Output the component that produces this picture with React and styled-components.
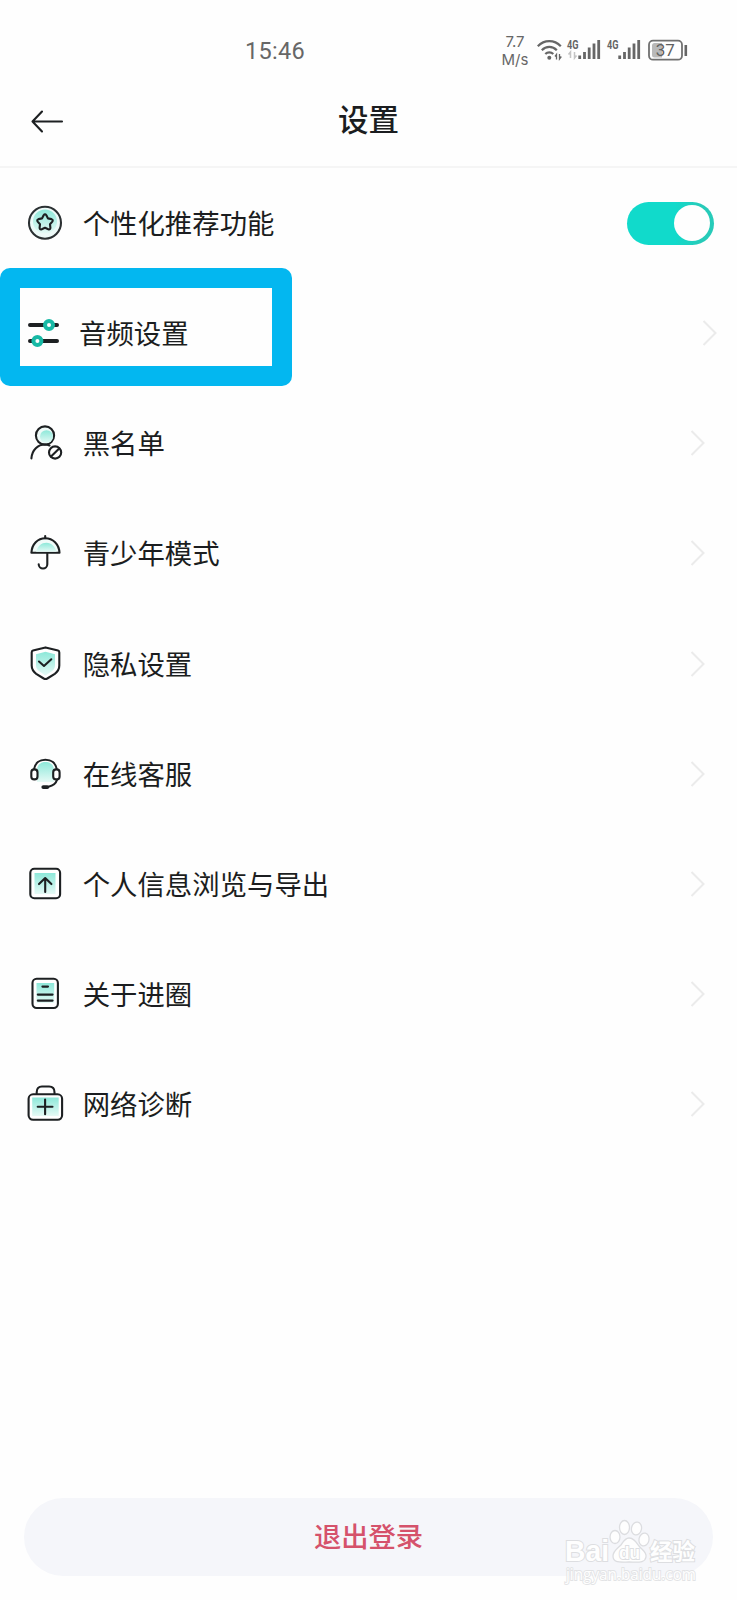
import React from "react";
import styled, { createGlobalStyle, css } from "styled-components";

const GlobalStyle = createGlobalStyle`
  *, *::before, *::after { box-sizing: border-box; }
  body { margin: 0; background: #fefefe; }
  button { font: inherit; border: 0; padding: 0; background: none; }
  svg { display: block; flex: none; overflow: visible; }
`;

const Screen = styled.div`
  position: relative;
  display: flex;
  flex-direction: column;
  width: 737px;
  height: 1600px;
  overflow: hidden;
  background: #fefefe;
  color: #1b1d20;
  font-family: "Noto Sans CJK SC", "Noto Sans", sans-serif;
`;

const StatusBar = styled.div`
  display: flex;
  align-items: center;
  justify-content: space-between;
  height: 76px;
  padding: 25px 50px 0 245px;
  color: #676767;
  font-family: Roboto, sans-serif;
`;

const Clock = styled.time`
  font-size: 23.5px;
  line-height: 50px;
  letter-spacing: 0.3px;
`;

const StatusIcons = styled.div`
  display: flex;
  align-items: center;
`;

const NetSpeed = styled.div`
  display: flex;
  flex-direction: column;
  width: 32px;
  margin-right: 7px;
  text-align: center;
  font-family: Inter, sans-serif;
  font-size: 15px;
  line-height: 18px;
`;

const Header = styled.header`
  display: grid;
  grid-template-columns: 1fr auto 1fr;
  align-items: center;
  height: 92px;
  padding: 0 31px 2px;
  border-bottom: 2px solid #f5f5f5;
`;

const Title = styled.h1`
  margin: 0;
  padding-bottom: 5px;
  font-size: 30.5px;
  font-weight: 500;
  line-height: 44px;
`;

const BackButton = styled.button`
  width: 34px;
  padding-top: 3px;
`;

const List = styled.main`
  flex: 1;
`;

const Row = styled.div`
  position: relative;
  display: flex;
  align-items: center;
  height: 110.15px;
  padding: 0 ${(p) => (p.$wide ? 23.5 : 32)}px 0 25px;
  ${(p) =>
    p.$marked &&
    css`
      padding-right: 20.5px;
      &::after {
        content: "";
        position: absolute;
        left: 0;
        top: -10px;
        width: 292px;
        height: 118px;
        border-radius: 10px;
        background:
          linear-gradient(#03b7f0, #03b7f0) 0 0 / 100% 20px no-repeat,
          linear-gradient(#03b7f0, #03b7f0) 0 100% / 100% 20px no-repeat,
          linear-gradient(#03b7f0, #03b7f0) 0 0 / 20px 100% no-repeat,
          linear-gradient(#03b7f0, #03b7f0) 100% 0 / 20px 100% no-repeat;
      }
    `}
`;

const Label = styled.span`
  flex: 1;
  margin-left: ${(p) => (p.$tight ? 14 : 17.7)}px;
  padding-bottom: 2px;
  font-size: 27.4px;
  line-height: 40px;
`;

const Switch = styled.button`
  display: flex;
  align-items: center;
  justify-content: flex-end;
  width: 87px;
  height: 43px;
  padding-right: 4px;
  border-radius: 22px;
  background: linear-gradient(90deg, #11dacb 55%, #27cbb9 85%);
`;

const Knob = styled.span`
  width: 36px;
  height: 36px;
  border-radius: 50%;
  background: #fefefe;
`;

const Footer = styled.footer`
  padding: 0 24px 24px;
`;

const LogoutButton = styled.button`
  width: 100%;
  height: 78px;
  padding-bottom: 5px;
  border-radius: 39px;
  background: #f5f6fa;
  color: #d5526b;
  font-size: 27.3px;
  font-weight: 500;
  line-height: 72px;
`;

const Watermark = styled.div`
  position: absolute;
  left: 560px;
  top: 1516px;
`;

const icons = {
  star: (
    <>
      <circle cx="20" cy="19.7" r="16" fill="#edfaf8" stroke="#2b3032" />
      <circle cx="20" cy="18.5" r="12" fill="url(#mint)" stroke="none" />
      <path d="M18.6 12.3q1.4-2 2.8 0l1.6 3.1 3.5.7q2 .8.8 2.5l-2.3 2.6.4 3.6q0 2.1-2.1 1.5L20 24.8l-3.3 1.5q-2.1.6-2.1-1.5l.4-3.6-2.3-2.6q-1.2-1.7.8-2.5l3.5-.7z" />
    </>
  ),
  sliders: (
    <>
      <path d="M5 12h27M5 28h27" strokeWidth="4" />
      <circle cx="24" cy="12" r="4" fill="#fff" stroke="#17b9a5" strokeWidth="4" />
      <circle cx="12.4" cy="28" r="4" fill="#fff" stroke="#17b9a5" strokeWidth="4" />
    </>
  ),
  blocked: (
    <>
      <circle cx="20" cy="12.5" r="9.1" fill="#eefaf8" />
      <circle cx="21.5" cy="13.7" r="6.5" fill="url(#mint)" stroke="none" />
      <path d="M6.4 35.4C7 26.6 13 21.5 20 21.5c2 0 3.3.4 4.5 1" />
      <circle cx="30.1" cy="29.5" r="6.1" />
      <path d="m26 33.6 8.2-8.2" />
    </>
  ),
  umbrella: (
    <>
      <path d="M6.4 19.8C6.8 11 12.8 5.2 20.3 5.2S34.1 11 34.5 19.8z" fill="#f0fbf9" />
      <path d="M11 18.8c2-6 5.3-9 10.5-9 5 0 8.5 4 10.2 9z" fill="url(#mint)" stroke="none" />
      <path d="M20.2 5.2V3M22.3 20v11.2a4.3 4.3 0 0 1-8.6 0" />
    </>
  ),
  shield: (
    <>
      <path d="M20.5 3.4 33 6.6q1.3.4 1.3 1.8v13.2q0 5-4.5 8.2l-7.5 4.7q-1.8 1-3.6 0l-7.5-4.7q-4.5-3.2-4.5-8.2V8.4q0-1.4 1.3-1.8z" fill="#fff" />
      <path d="m20.5 7.8 9.5 2.4v11q0 4-3.5 6.3l-6 4-6-4Q11 25.2 11 21.2v-11z" fill="url(#mint)" stroke="none" />
      <path d="m14 17.5 5 4.5 7.3-6.7" />
    </>
  ),
  headset: (
    <>
      <path d="M12 28V15c1-5 4-7 8.5-7s7.5 2 8.5 7v13z" fill="url(#mint)" stroke="none" />
      <path d="M9 15.4C10 9 14.6 5.7 20.4 5.7S30.800 9 31.8 15.4M32 25.8c-1 3.7-4.3 6-8.5 6.9" />
      <rect x="6.3" y="15.4" width="6.2" height="10" rx="3" fill="#fff" />
      <rect x="28.2" y="15.4" width="6.4" height="10" rx="3" fill="#fff" />
      <path d="M18.3 33.1h4" strokeWidth="3.8" />
    </>
  ),
  upload: (
    <>
      <rect x="5.3" y="4.8" width="29.8" height="29.5" rx="4" fill="#fff" />
      <path d="M9.5 9h21v21h-21z" fill="url(#mint)" stroke="none" />
      <path d="M20.2 28V14.1M14 20.1l6.2-6.1 6.2 6.1" />
    </>
  ),
  document: (
    <>
      <rect x="7.5" y="4.8" width="25.4" height="29.2" rx="4.2" fill="#fff" />
      <path d="M11.5 9h17.7v20H11.5z" fill="url(#mint)" stroke="none" />
      <path d="M17.4 12.6h5.6M12.8 20.6h14.8M12.8 26.6h14.8" />
    </>
  ),
  medkit: (
    <>
      <path d="M11.7 9.5V8.2c0-3.5 2-5.7 5.2-5.7h7.2c3.3 0 5.4 2.2 5.4 5.7v1.3" />
      <rect x="3.6" y="10.3" width="33.5" height="25.5" rx="4.5" fill="#fff" />
      <path d="M7.2 13.5h26.5V32H7.200z" fill="url(#mint)" stroke="none" />
      <path d="M12.7 22.8h14.8M20.1 15.5v14.7" />
    </>
  ),
};

function RowIcon({ name }) {
  return (
    <svg width="40" height="40" viewBox="0 0 40 40" fill="none" stroke="#1d2022" strokeWidth="2.1" strokeLinecap="round" strokeLinejoin="round">
      {icons[name]}
    </svg>
  );
}

function Chevron() {
  return (
    <svg width="15" height="28" viewBox="0 0 15 28" fill="none" stroke="#ebebeb" strokeWidth="2">
      <path d="M1.5 2 13.5 14 1.5 26" />
    </svg>
  );
}

const Tag = styled.text`
  font: 700 12px Roboto, sans-serif;
  fill: #666;
`;

function Signal({ data }) {
  return (
    <svg width="40" height="26" viewBox="0 0 40 26">
      <Tag x="-1" y="10.5" textLength="11.5" lengthAdjust="spacingAndGlyphs">4G</Tag>
      {data && <path d="M2.500 20v-6L.5 16.5M6.500 14v6l2-2.500" stroke="#c4c4c4" strokeWidth="1.5" fill="none" />}
      <path d="M11.700 17.500V21M16.500 14v7M21.200 9.500V21M26 5.500V21M30.700 2v19" stroke="#666" strokeWidth="2.8" />
    </svg>
  );
}

function Wifi() {
  return (
    <svg width="30" height="26" viewBox="1 1 30 26" fill="none" stroke="#666" strokeWidth="2.2">
      <path d="M.8 9.2c6.500-6.800 16.500-6.800 23 0M4.800 13.200c4.300-4.400 10.700-4.400 15 0M8.300 17c2.300-2.300 5.700-2.300 8 0" />
      <circle cx="12.3" cy="20.8" r="2" fill="#666" stroke="none" />
      <path d="M19.500 22.500v-5l-1.500 2M22.500 17v5l1.800-2.500" strokeWidth="1.3" />
    </svg>
  );
}

const BatteryText = styled.text`
  font: 400 17px Roboto, sans-serif;
  fill: #606060;
`;

function Battery() {
  return (
    <svg width="39" height="24" viewBox="0 0.5 39 24">
      <rect x="1" y="2.2" width="33" height="19" rx="4" fill="none" stroke="#707070" strokeWidth="1.8" />
      <path d="M6.5 4.5H14V19H6.5Q4 19 4 16.5V7q0-2.500 2.500-2.500z" fill="#b9b9b9" />
      <path d="M37.8 6.500v11" stroke="#666" strokeWidth="2.6" />
      <BatteryText x="17.2" y="17.8" textAnchor="middle">37</BatteryText>
    </svg>
  );
}

const MarkText = styled.text`
  font-family: ${(p) => (p.$cjk ? '"Noto Sans CJK SC"' : '"Liberation Sans"')}, sans-serif;
  font-size: ${(p) => p.$size}px;
  font-weight: 700;
  fill: #fefefe;
  stroke: #dddee1;
  stroke-width: ${(p) => p.$line || 2}px;
  paint-order: stroke;
`;

const MarkUrl = styled.text`
  font: 400 16px "Open Sans", sans-serif;
  fill: #fefefe;
  stroke: #e2e3e5;
  stroke-width: 1.8px;
  paint-order: stroke;
`;

const rows = [
  { icon: "star", label: "个性化推荐功能", toggle: true },
  { icon: "sliders", label: "音频设置", marked: true },
  { icon: "blocked", label: "黑名单" },
  { icon: "umbrella", label: "青少年模式" },
  { icon: "shield", label: "隐私设置" },
  { icon: "headset", label: "在线客服" },
  { icon: "upload", label: "个人信息浏览与导出" },
  { icon: "document", label: "关于进圈" },
  { icon: "medkit", label: "网络诊断" },
];

export default function App() {
  return (
    <Screen>
      <GlobalStyle />
      <svg width="0" height="0" style={{ position: "absolute" }}>
        <defs>
          <linearGradient id="mint" x1="0" y1="0" x2="0" y2="1">
            <stop offset="0" stopColor="#8de8d9" />
            <stop offset="1" stopColor="#e6faf6" />
          </linearGradient>
        </defs>
      </svg>
      <StatusBar>
        <Clock>15:46</Clock>
        <StatusIcons>
          <NetSpeed>
            <span>7.7</span>
            <span>M/s</span>
          </NetSpeed>
          <Wifi />
          <Signal data />
          <Signal />
          <Battery />
        </StatusIcons>
      </StatusBar>
      <Header>
        <BackButton aria-label="返回">
          <svg width="34" height="26" viewBox="0 0 34 26" fill="none" stroke="#1d2022" strokeWidth="2.1" strokeLinecap="round" strokeLinejoin="round">
            <path d="M31 12.5H1.5M11 2.5 1.5 12.5 11 22.5" />
          </svg>
        </BackButton>
        <Title>设置</Title>
      </Header>
      <List>
        {rows.map((row) => (
          <Row key={row.icon} $wide={row.toggle} $marked={row.marked}>
            <RowIcon name={row.icon} />
            <Label $tight={row.marked}>{row.label}</Label>
            {row.toggle ? <Switch role="switch" aria-checked="true"><Knob /></Switch> : <Chevron />}
          </Row>
        ))}
      </List>
      <Footer>
        <LogoutButton>退出登录</LogoutButton>
      </Footer>
      <Watermark>
        <svg width="145" height="72" viewBox="0 0 145 72">
          <MarkText x="5" y="45" $size="29" textLength="44" lengthAdjust="spacingAndGlyphs">Bai</MarkText>
          <g fill="#fefefe" stroke="#dcdde0" strokeWidth="1.3">
            <ellipse cx="55" cy="21" rx="5" ry="6.5" />
            <ellipse cx="64.5" cy="11.5" rx="5" ry="7" />
            <ellipse cx="76.5" cy="12.5" rx="5" ry="6.5" transform="rotate(12 76.5 12.5)" />
            <ellipse cx="84" cy="23.5" rx="5" ry="6.5" transform="rotate(12 84 23.5)" />
            <path d="M69 22c5 0 7 4 10 8s8 6 7 11c-1 6-7 5-17 5s-16 1-16-6c0-5 4-7 8-11 2-3 4-7 8-7z" />
          </g>
          <MarkText x="59" y="43" $size="19" $line="2" textLength="21" lengthAdjust="spacingAndGlyphs">du</MarkText>
          <MarkText x="90" y="43.5" $size="22.5" $cjk>经验</MarkText>
          <MarkUrl x="6" y="63.5" textLength="130" lengthAdjust="spacingAndGlyphs">jingyan.baidu.com</MarkUrl>
        </svg>
      </Watermark>
    </Screen>
  );
}
